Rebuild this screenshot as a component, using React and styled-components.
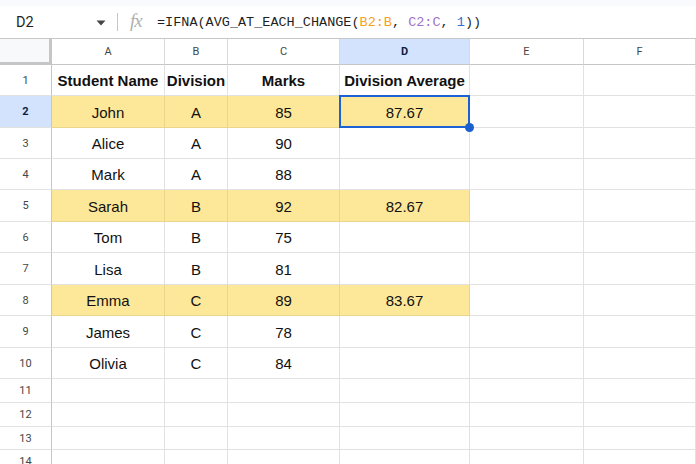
import React from 'react'
import styled, { createGlobalStyle } from 'styled-components'

const GlobalStyle = createGlobalStyle`
    html, body {
        margin: 0;
        padding: 0;
        background: #ffffff;
        overflow: hidden;
    }
    body {
        font-family: "Liberation Sans", Arial, sans-serif;
    }
`;

const columns = ['A', 'B', 'C', 'D', 'E', 'F']
const colWidths = '52px 113px 63px 112px 130px 114px 1fr'

const rows = [
    { cells: ['Student Name', 'Division', 'Marks', 'Division Average'], bold: true, h: 31 },
    { cells: ['John', 'A', '85', '87.67'], fill: true, h: 32 },
    { cells: ['Alice', 'A', '90', ''], h: 31 },
    { cells: ['Mark', 'A', '88', ''], h: 31 },
    { cells: ['Sarah', 'B', '92', '82.67'], fill: true, h: 32 },
    { cells: ['Tom', 'B', '75', ''], h: 31 },
    { cells: ['Lisa', 'B', '81', ''], h: 32 },
    { cells: ['Emma', 'C', '89', '83.67'], fill: true, h: 31 },
    { cells: ['James', 'C', '78', ''], h: 32 },
    { cells: ['Olivia', 'C', '84', ''], h: 31 },
    { cells: [], h: 24 },
    { cells: [], h: 24 },
    { cells: [], h: 23 },
    { cells: [], h: 23 },
]

function App() {
    return (
        <>
            <GlobalStyle />
            <Sheet>
                <TopStrip />
                <FormulaBar>
                    <NameBox>D2</NameBox>
                    <DropArrow>
                        <svg width="10" height="6" viewBox="0 0 10 6">
                            <path d="M0.5 0.5h9L5 5.5z" fill="#444746" />
                        </svg>
                    </DropArrow>
                    <Divider />
                    <FxIcon>fx</FxIcon>
                    <Formula>
                        =IFNA(AVG_AT_EACH_CHANGE(<Token color="#f4a21b">B2:B</Token>, <Token color="#a072cc">C2:C</Token>, <Token color="#2f6fd8">1</Token>))
                    </Formula>
                </FormulaBar>
                <Grid>
                    <Corner />
                    {columns.map((c) => (
                        <ColHeader key={c} active={c === 'D'}>{c}</ColHeader>
                    ))}
                    {rows.map((row, i) => {
                        const n = i + 1
                        return (
                            <React.Fragment key={n}>
                                <RowHeader active={n === 2} style={{ height: row.h }}>{n}</RowHeader>
                                {columns.map((c, j) => {
                                    const fill = row.fill && j < 4
                                    return (
                                        <Cell
                                            key={c}
                                            fill={fill ? 1 : 0}
                                            bold={row.bold ? 1 : 0}
                                            selected={n === 2 && c === 'D' ? 1 : 0}
                                        >
                                            {row.cells[j] || ''}
                                        </Cell>
                                    )
                                })}
                            </React.Fragment>
                        )
                    })}
                </Grid>
            </Sheet>
        </>
    )
}

const Sheet = styled.div`
    width: 696px;
    height: 464px;
    overflow: hidden;
    display: flex;
    flex-direction: column;
    background: #ffffff;
`;

const TopStrip = styled.div`
    height: 6px;
    background: #f8fafd;
    flex-shrink: 0;
`;

const FormulaBar = styled.div`
    height: 32px;
    flex-shrink: 0;
    display: flex;
    align-items: center;
    border-bottom: 1px solid #c7c7c7;
    background: #ffffff;
    box-sizing: content-box;
`;

const NameBox = styled.div`
    width: 80px;
    padding-left: 16px;
    font-family: Roboto, "Liberation Sans", sans-serif;
    font-size: 14.5px;
    color: #1f1f1f;
`;

const DropArrow = styled.div`
    display: flex;
    align-items: center;
    width: 21px;
    margin-top: 1px;
`;

const Divider = styled.div`
    width: 1px;
    height: 18px;
    background: #c7c7c7;
    margin-right: 12px;
`;

const FxIcon = styled.div`
    font-family: "Liberation Serif", serif;
    font-style: italic;
    font-size: 19px;
    color: #b0b0b0;
    width: 27px;
    margin-top: -2px;
    letter-spacing: -1px;
`;

const Formula = styled.div`
    font-family: "Liberation Mono", "DejaVu Sans Mono", monospace;
    font-size: 13.5px;
    color: #1f1f1f;
    white-space: pre;
`;

const Token = styled.span`
    color: ${(p) => p.color};
`;

const Grid = styled.div`
    display: grid;
    grid-template-columns: ${colWidths};
    grid-auto-rows: min-content;
    font-family: "Liberation Sans", Arial, sans-serif;
`;

const Corner = styled.div`
    height: 26px;
    box-sizing: border-box;
    background: #f8f9fa;
    border-right: 3px solid #c4c6c8;
    border-bottom: 3px solid #c4c6c8;
`;

const ColHeader = styled.div`
    height: 26px;
    box-sizing: border-box;
    display: flex;
    align-items: center;
    justify-content: center;
    font-family: Roboto, "Liberation Sans", sans-serif;
    font-size: 11px;
    color: ${(p) => (p.active ? '#0b1f3f' : '#444746')};
    font-weight: ${(p) => (p.active ? 700 : 400)};
    background: ${(p) => (p.active ? '#d3e3fd' : '#ffffff')};
    border-right: 1px solid #d9d9d9;
    border-bottom: 1px solid #c4c7c5;
`;

const RowHeader = styled.div`
    box-sizing: border-box;
    display: flex;
    align-items: center;
    justify-content: center;
    font-family: Roboto, "Liberation Sans", sans-serif;
    font-size: 11px;
    color: ${(p) => (p.active ? '#0b1f3f' : '#444746')};
    font-weight: ${(p) => (p.active ? 700 : 400)};
    background: ${(p) => (p.active ? '#d3e3fd' : '#ffffff')};
    border-right: 1px solid #c4c7c5;
    border-bottom: 1px solid #e1e1e1;
`;

const Cell = styled.div`
    position: relative;
    box-sizing: border-box;
    display: flex;
    align-items: center;
    justify-content: center;
    padding-top: 1px;
    font-size: 15px;
    font-weight: ${(p) => (p.bold ? 700 : 400)};
    color: #111111;
    white-space: nowrap;
    background: ${(p) => (p.fill ? '#fde89a' : '#ffffff')};
    border-right: 1px solid ${(p) => (p.fill ? '#e9d68c' : '#e1e1e1')};
    border-bottom: 1px solid ${(p) => (p.fill ? '#e9d68c' : '#e1e1e1')};
    ${(p) => p.selected && `
        &::before {
            content: '';
            position: absolute;
            left: -1px;
            top: -1px;
            right: -1px;
            bottom: -1px;
            border: 2px solid #1a62d6;
            z-index: 2;
        }
        &::after {
            content: '';
            position: absolute;
            right: -5px;
            bottom: -5px;
            width: 9px;
            height: 9px;
            border-radius: 50%;
            background: #1a5fd0;
            z-index: 3;
        }
    `}
`;

export default App
